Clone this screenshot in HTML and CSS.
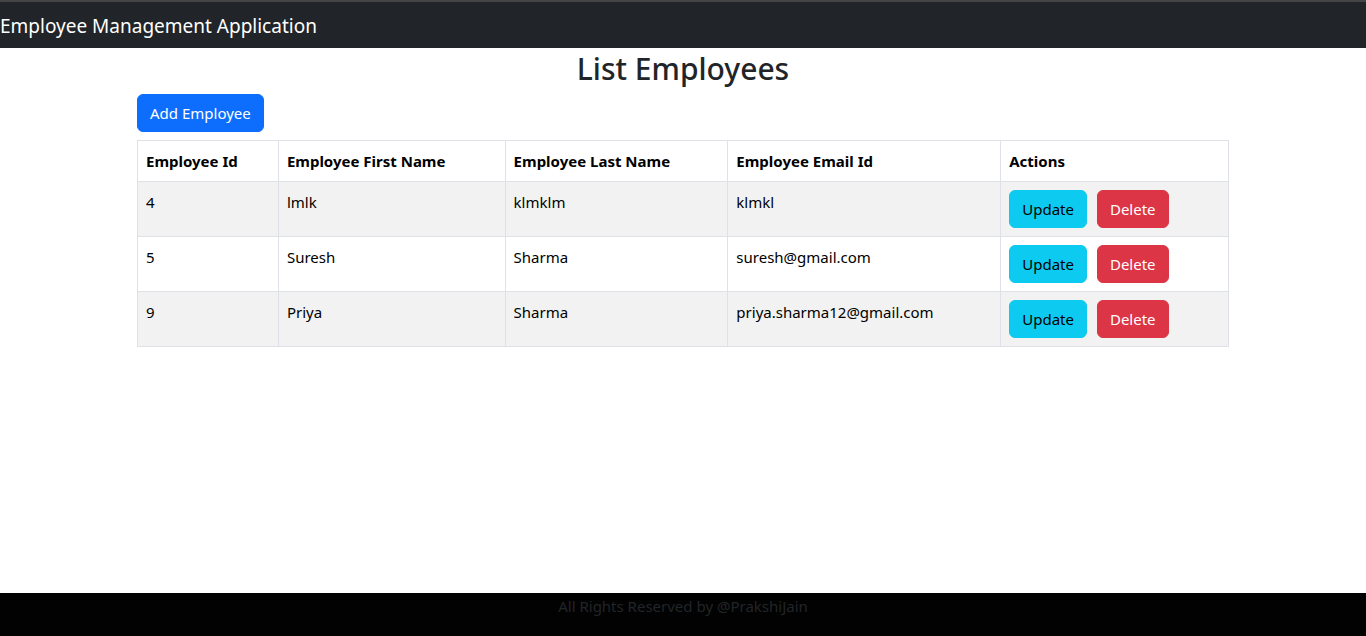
FILE: index.html
```html
<!DOCTYPE html>
<html lang="en">
<head>
<meta charset="utf-8">
<title>Employee Management Application</title>
<link rel="stylesheet" href="styles.css">
</head>
<body>
<header class="navbar">
  <span class="brand">Employee Management Application</span>
</header>
<main class="container">
  <h2 class="title">List Employees</h2>
  <div class="toolbar">
    <button class="btn btn-primary">Add Employee</button>
  </div>
  <table class="table">
    <thead>
      <tr>
        <th class="c1">Employee Id</th>
        <th class="c2">Employee First Name</th>
        <th class="c3">Employee Last Name</th>
        <th class="c4">Employee Email Id</th>
        <th class="c5">Actions</th>
      </tr>
    </thead>
    <tbody>
      <tr class="striped">
        <td>4</td><td>lmlk</td><td>klmklm</td><td>klmkl</td>
        <td><button class="btn btn-info">Update</button><button class="btn btn-danger">Delete</button></td>
      </tr>
      <tr>
        <td>5</td><td>Suresh</td><td>Sharma</td><td>suresh@gmail.com</td>
        <td><button class="btn btn-info">Update</button><button class="btn btn-danger">Delete</button></td>
      </tr>
      <tr class="striped">
        <td>9</td><td>Priya</td><td>Sharma</td><td>priya.sharma12@gmail.com</td>
        <td><button class="btn btn-info">Update</button><button class="btn btn-danger">Delete</button></td>
      </tr>
    </tbody>
  </table>
</main>
<footer class="footer">
  <span class="footer-text">All Rights Reserved by @PrakshiJain</span>
</footer>
</body>
</html>
```

FILE: styles.css
```css
* { box-sizing: border-box; }
html, body { margin: 0; padding: 0; }
body {
  font-family: "Noto Sans", "Open Sans", sans-serif;
  font-size: 15px;
  line-height: 24px;
  color: #212529;
  background: #fff;
  height: 636px;
  position: relative;
}
.navbar {
  height: 48px;
  background: #212529;
  border-top: 2px solid #454545;
  display: flex;
  align-items: center;
}
.brand {
  color: #fff;
  font-size: 19px;
  line-height: 30px;
  padding-top: 2px;
}
.container {
  width: 1092px;
  margin: 0 auto;
}
.title {
  margin: 2px 0 6px 0;
  font-size: 30px;
  font-weight: 500;
  line-height: 38px;
  text-align: center;
  color: #212529;
}
.toolbar { margin-bottom: 8px; }
.btn {
  font-family: inherit;
  font-size: 15px;
  line-height: 24px;
  padding: 6px 12px;
  border: 1px solid transparent;
  border-radius: 6px;
  cursor: pointer;
}
.btn-primary { background: #0d6efd; color: #fff; border-color: #0d6efd; }
.btn-info { background: #0dcaf0; color: #000; border-color: #0dcaf0; }
.btn-danger { background: #dc3545; color: #fff; border-color: #dc3545; margin-left: 10px; }
.table {
  width: 100%;
  border-collapse: collapse;
  color: #000;
}
.table th, .table td {
  border: 1px solid #dee2e6;
  padding: 8px;
  text-align: left;
  vertical-align: top;
}
.table th { font-weight: 700; }
.c1 { width: 141px; }
.c2 { width: 227px; }
.c3 { width: 223px; }
.c4 { width: 273px; }
.c5 { width: 228px; }
.striped td { background: #f2f2f2; }
.footer {
  position: absolute;
  left: 0;
  right: 0;
  bottom: 0;
  height: 43px;
  background: #020202;
  text-align: center;
}
.footer-text {
  color: #212529;
  font-size: 15px;
  line-height: 26px;
}
```
